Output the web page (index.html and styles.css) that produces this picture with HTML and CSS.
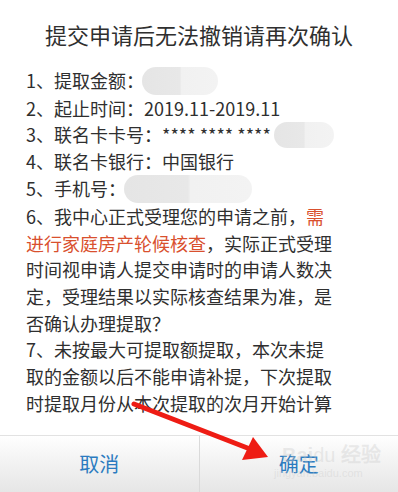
FILE: index.html
```html
<!DOCTYPE html>
<html lang="zh-CN">
<head>
<meta charset="utf-8">
<link rel="stylesheet" href="styles.css">
</head>
<body>
<div class="dialog">
  <div class="title">提交申请后无法撤销请再次确认</div>
  <div class="content">
    <p>1、提取金额：<span class="blob blob1"></span></p>
    <p>2、起止时间：2019.11-2019.11</p>
    <p>3、联名卡卡号：**** **** ****<span class="blob blob2"></span></p>
    <p>4、联名卡银行：中国银行</p>
    <p>5、手机号：<span class="blob blob3"></span></p>
    <p>6、我中心正式受理您的申请之前，<span class="red">需<br>进行家庭房产轮候核查</span>，实际正式受理<br>时间视申请人提交申请时的申请人数决<br>定，受理结果以实际核查结果为准，是<br>否确认办理提取？</p>
    <p>7、未按最大可提取额提取，本次未提<br>取的金额以后不能申请补提，下次提取<br>时提取月份从本次提取的次月开始计算</p>
  </div>
  <div class="footer">
    <div class="btn">取消</div>
    <div class="sep"></div>
    <div class="btn">确定</div>
  </div>
  <div class="watermark">
    <span class="wm-main">Bai<span class="wm-du">du</span> 经验</span>
    <span class="wm-sub">jingyan.baidu.com</span>
  </div>
  <svg class="arrow" width="398" height="492" viewBox="0 0 398 492">
    <line x1="134" y1="404" x2="250" y2="449" stroke="#ee1c14" stroke-width="5" stroke-linecap="round"/>
    <polygon points="268,457 242,460 253,437" fill="#ee1c14"/>
  </svg>
</div>
</body>
</html>
```

FILE: styles.css
```css
html, body {
  margin: 0;
  padding: 0;
  background: #fff;
}
.dialog {
  position: relative;
  width: 398px;
  height: 492px;
  display: flex;
  flex-direction: column;
  font-family: "Noto Sans CJK SC", "Noto Sans", sans-serif;
  color: #2f2f2f;
  overflow: hidden;
}
.title {
  padding-top: 19px;
  height: 30px;
  line-height: 30px;
  font-size: 22px;
  text-align: center;
}
.content {
  padding: 17.7px 20px 0 26px;
  font-size: 18px;
  line-height: 26.67px;
  flex: 1;
}
.content p {
  margin: 0;
  white-space: nowrap;
}
.red {
  color: #d9502e;
}
.blob {
  display: inline-block;
  vertical-align: middle;
  border-radius: 14px;
  background: linear-gradient(90deg, #e5e5e5 0%, #e8e8e8 50%, #f1f1f1 52%, #f3f3f3 100%);
  filter: blur(0.6px);
}
.blob1 {
  width: 76px;
  height: 28px;
  margin-left: -2px;
  margin-top: -4px;
}
.blob2 {
  width: 60px;
  height: 26px;
  margin-left: 3px;
  margin-top: -6px;
}
.blob3 {
  width: 128px;
  height: 28px;
  margin-left: -2px;
  margin-top: -4px;
}
.footer {
  height: 56px;
  border-top: 1px solid #e2e2e2;
  display: flex;
  background: linear-gradient(#ffffff, #f4f4f4 40%, #e6e6e6);
}
.btn {
  flex: 1;
  display: flex;
  align-items: center;
  justify-content: center;
  font-size: 20px;
  color: #2b7bc0;
  padding-bottom: 2px;
}
.sep {
  width: 1px;
  background: #dadada;
}
.watermark {
  position: absolute;
  left: 282px;
  top: 444px;
  display: flex;
  flex-direction: column;
  color: rgba(200, 200, 200, 0.35);
  font-family: "Liberation Sans", sans-serif;
  pointer-events: none;
}
.wm-main {
  font-size: 20px;
  line-height: 22px;
  font-weight: bold;
}
.wm-du {
  font-weight: normal;
}
.wm-sub {
  font-size: 11px;
  line-height: 14px;
  margin-left: -8px;
}
.arrow {
  position: absolute;
  left: 0;
  top: 0;
  pointer-events: none;
}
```
